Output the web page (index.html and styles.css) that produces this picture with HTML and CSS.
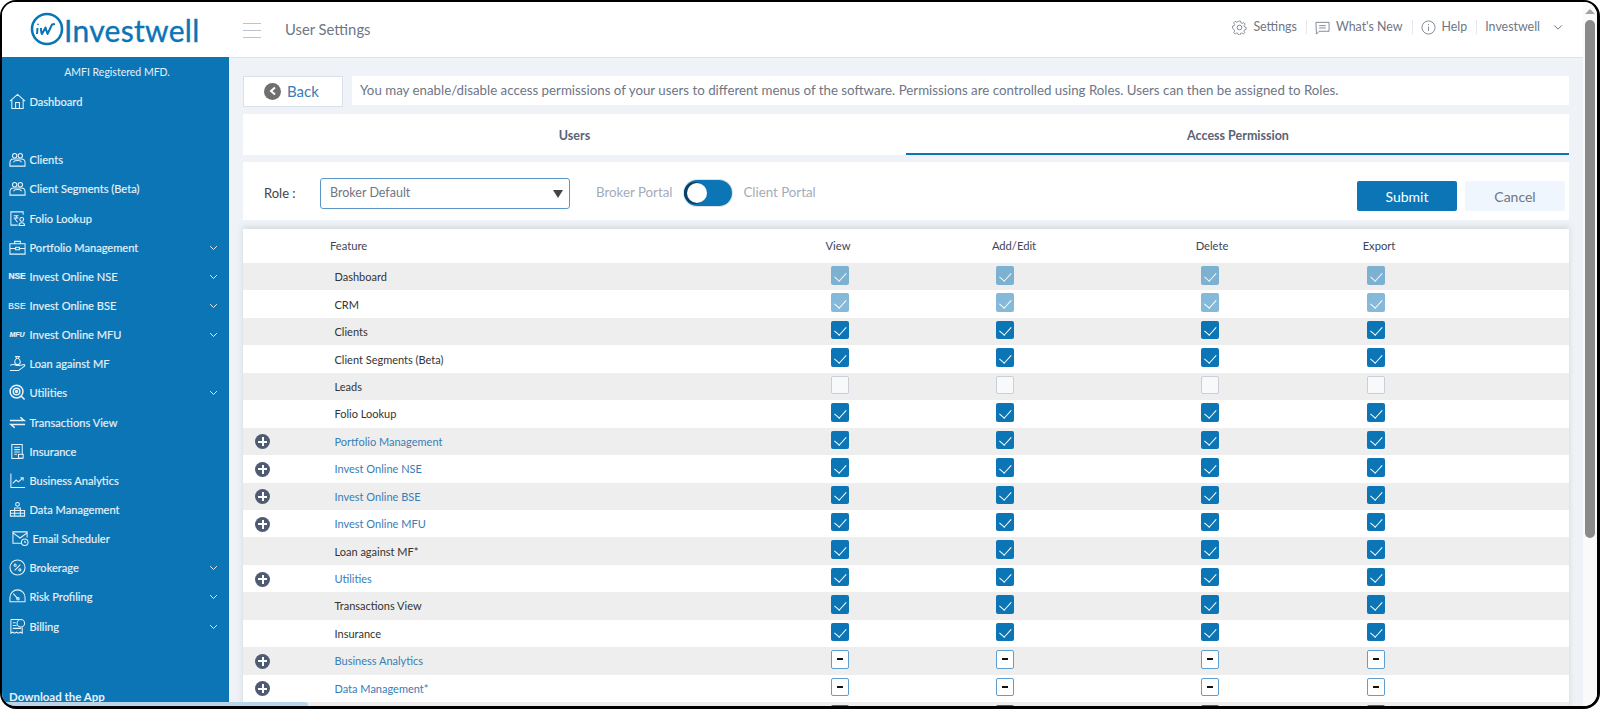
FILE: index.html
```html
<!DOCTYPE html>
<html lang="en">
<head>
<meta charset="utf-8">
<title>User Settings</title>
<link rel="stylesheet" href="styles.css">
</head>
<body>
<div class="frame">
  <div class="app">
    <header class="topbar">
      <div class="logo">
        <svg class="logo-mark" viewBox="0 0 34 34"><circle cx="17" cy="17" r="15" fill="none" stroke="#0c75b5" stroke-width="2.6"/><path d="M7.500 16 7 22M8 11.800v1M11 16c0 3 0 5 1 6l3.500-6.500L17.500 22l4.500-9.500 3-.5" fill="none" stroke="#0c75b5" stroke-width="2" stroke-linejoin="round"/></svg>
        <span class="logo-text">Investwell</span>
      </div>
      <div class="burger"><i></i><i></i><i></i></div>
      <div class="page-title">User Settings</div>
      <nav class="topnav">
        <a class="tn"><svg viewBox="0 0 16 16"><circle cx="8" cy="8" r="2.500"/><path d="M6.800 1h2.400l.4 2 1.500.7 1.800-1 1.500 1.800-1.200 1.700.4 1.600 1.900.6v2.200l-1.900.6-.6 1.500 1 1.700-1.700 1.500-1.700-1.100-1.500.6-.4 1.900H6.800l-.5-1.900-1.500-.6-1.600 1.100-1.700-1.500 1-1.700-.6-1.500L.1 9.200V7l1.900-.6.500-1.600-1.100-1.700L3 1.300l1.700 1 1.600-.6z" transform="translate(.4 .2) scale(.95 .92)"/></svg>Settings</a>
        <a class="tn"><svg viewBox="0 0 16 16"><path d="M1 2.500h14v9.500H4.500L1.500 15z"/><path d="M4.500 6h7M4.500 8.500h7"/></svg>What's New</a>
        <a class="tn"><svg viewBox="0 0 16 16"><circle cx="8" cy="8" r="7"/><path d="M8 7v4.500M8 4.300v1.200"/></svg>Help</a>
        <a class="tn tn-user">Investwell<svg class="tn-chev" viewBox="0 0 12 8"><path d="M1.500 1.500 6 6l4.500-4.500"/></svg></a>
      </nav>
    </header>
    <div class="workspace">
      <aside class="sidebar">
        <div class="amfi">AMFI Registered MFD.</div>
        <ul class="menu">
          <li><span class="mi"><svg viewBox="0 0 18 18"><path d="M1 8.500 9 1.500l8 7M3 7.500V16.500h12V7.500M7 16.500V10h4v6.500"/></svg></span>Dashboard</li>
          <li class="blank"></li>
          <li><span class="mi"><svg viewBox="0 0 18 18"><circle cx="6" cy="5" r="2.300"/><circle cx="12" cy="5" r="2.300"/><path d="M1 12.500c0-3 2-4 4-4h8c2 0 4 1 4 4M1 12.500v3.500h16v-3.500M5 12c0-1.500 1.500-2 4-2s4 .5 4 2"/></svg></span>Clients</li>
          <li><span class="mi"><svg viewBox="0 0 18 18"><circle cx="6" cy="5" r="2.300"/><circle cx="12" cy="5" r="2.300"/><path d="M1 12.500c0-3 2-4 4-4h8c2 0 4 1 4 4M1 12.500v3.500h16v-3.500M5 12c0-1.500 1.500-2 4-2s4 .5 4 2"/></svg></span>Client Segments (Beta)</li>
          <li><span class="mi"><svg viewBox="0 0 18 18"><path d="M15 5V2H2v14h7"/><path d="M5 6h5M5 8.500h5M6 6c3 0 3 3 0 3l3 4"/><circle cx="13.500" cy="10" r="2"/><path d="M10.500 16.500c0-4 6-4 6 0z"/></svg></span>Folio Lookup</li>
          <li class="has"><span class="mi"><svg viewBox="0 0 18 18"><path d="M1 5h16v11H1zM6 5V2.500h6V5M1 10h6M11 10h6"/><rect x="7" y="8.800" width="4" height="2.600"/></svg></span>Portfolio Management<svg class="chev" viewBox="0 0 12 8"><path d="M1.500 1.500 6 6l4.500-4.500"/></svg></li>
          <li class="has"><span class="mi mi-tag">NSE</span>Invest Online NSE<svg class="chev" viewBox="0 0 12 8"><path d="M1.500 1.500 6 6l4.500-4.500"/></svg></li>
          <li class="has"><span class="mi mi-tag mi-thin">BSE</span>Invest Online BSE<svg class="chev" viewBox="0 0 12 8"><path d="M1.500 1.500 6 6l4.500-4.500"/></svg></li>
          <li class="has"><span class="mi mi-tag mi-small">MFU</span>Invest Online MFU<svg class="chev" viewBox="0 0 12 8"><path d="M1.500 1.500 6 6l4.500-4.500"/></svg></li>
          <li><span class="mi"><svg viewBox="0 0 18 18"><path d="M7 1.500h4l-1 2H8zM8 3.500C5.500 5.500 5 10 9 10s3.500-4.500 1-6.500M1 11c3-1.500 5-1 6.500 0H11l5-1c.8 0 1 1.500 0 2l-6 4.500H1"/></svg></span>Loan against MF</li>
          <li class="has"><span class="mi"><svg class="thick" viewBox="0 0 18 18"><circle cx="8" cy="8" r="6.800"/><circle cx="8" cy="8" r="3.500"/><circle cx="8" cy="8" r="1"/><path d="m12.500 12.500 4 4"/></svg></span>Utilities<svg class="chev" viewBox="0 0 12 8"><path d="M1.500 1.500 6 6l4.500-4.500"/></svg></li>
          <li><span class="mi"><svg class="thick" viewBox="0 0 18 18"><path d="M1 7h15l-4-3.500M17 11H2l4 3.500"/></svg></span>Transactions View</li>
          <li><span class="mi"><svg viewBox="0 0 18 18"><path d="M3 1.500h11v15H3z"/><path d="M5.500 4.500h6M5.500 7h6M5.500 9.500h6M5.500 12h3"/><rect x="10" y="12" width="5" height="4" fill="#0c75b5"/></svg></span>Insurance</li>
          <li><span class="mi"><svg viewBox="0 0 18 18"><path d="M2 1.500V16.500h15M4 12l3.500-3.500 2.500 2 5-4.500M12 6h3v3"/></svg></span>Business Analytics</li>
          <li><span class="mi"><svg viewBox="0 0 18 18"><circle cx="9" cy="3.500" r="2"/><path d="M6 7.500h6v8.500H6zM1.500 10h4.500v6H1.500zM12 10h4.500v6H12zM1.500 13h15M6 10h6"/></svg></span>Data Management</li>
          <li class="indent"><span class="mi"><svg viewBox="0 0 18 18"><path d="M10 14H1V2h15v6M1 3l7.500 5.500L16 3"/><circle cx="13.500" cy="13" r="3.500"/><path d="M13.500 11.300V13h1.500"/></svg></span>Email Scheduler</li>
          <li class="has"><span class="mi"><svg viewBox="0 0 18 18"><circle cx="9" cy="9" r="8"/><path d="m6 12 6-6"/><circle cx="6.500" cy="6.500" r="1.100"/><circle cx="11.500" cy="11.500" r="1.100"/></svg></span>Brokerage<svg class="chev" viewBox="0 0 12 8"><path d="M1.500 1.500 6 6l4.500-4.500"/></svg></li>
          <li class="has tight"><span class="mi"><svg viewBox="0 0 18 18"><path d="M1 14.500V10a8 8 0 0 1 16 0v4.500zM4.500 6 9 11"/><circle cx="9.500" cy="11.500" r="1.300"/></svg></span>Risk Profiling<svg class="chev" viewBox="0 0 12 8"><path d="M1.500 1.500 6 6l4.500-4.500"/></svg></li>
          <li class="has"><span class="mi"><svg viewBox="0 0 18 18"><path d="M2 1.500h9M2 1.500V16l2-1 2 1 2-1 2 1 2-1 2 1v-6M4 5h3M4 8h4M4 11h9"/><circle cx="12.500" cy="5.500" r="4"/></svg></span>Billing<svg class="chev" viewBox="0 0 12 8"><path d="M1.500 1.500 6 6l4.500-4.500"/></svg></li>
        </ul>
        <div class="download">Download the App</div>
      </aside>
      <main class="main">
        <div class="intro">
          <button class="back"><span class="back-ico"><svg viewBox="0 0 10 10"><path d="M7 1.500 3 5l4 3.500"/></svg></span>Back</button>
          <p class="desc">You may enable/disable access permissions of your users to different menus of the software. Permissions are controlled using Roles. Users can then be assigned to Roles.</p>
        </div>
        <div class="tabs">
          <div class="tab">Users</div>
          <div class="tab active">Access Permission</div>
        </div>
        <div class="filters">
          <span class="role-label">Role :</span>
          <div class="select">Broker Default<i class="caret"></i></div>
          <span class="portal">Broker Portal</span>
          <span class="toggle"><i></i></span>
          <span class="portal">Client Portal</span>
          <div class="actions">
            <button class="btn primary">Submit</button>
            <button class="btn ghost">Cancel</button>
          </div>
        </div>
        <div class="table">
          <div class="thead">
            <span class="th-feature">Feature</span><span>View</span><span>Add/Edit</span><span>Delete</span><span>Export</span>
          </div>
          <div class="row"><span></span><span class="name">Dashboard</span><i class="cb dim"></i><i class="cb dim"></i><i class="cb dim"></i><i class="cb dim"></i></div>
          <div class="row"><span></span><span class="name">CRM</span><i class="cb dim"></i><i class="cb dim"></i><i class="cb dim"></i><i class="cb dim"></i></div>
          <div class="row"><span></span><span class="name">Clients</span><i class="cb"></i><i class="cb"></i><i class="cb"></i><i class="cb"></i></div>
          <div class="row"><span></span><span class="name">Client Segments (Beta)</span><i class="cb"></i><i class="cb"></i><i class="cb"></i><i class="cb"></i></div>
          <div class="row"><span></span><span class="name">Leads</span><i class="cb off"></i><i class="cb off"></i><i class="cb off"></i><i class="cb off"></i></div>
          <div class="row"><span></span><span class="name">Folio Lookup</span><i class="cb"></i><i class="cb"></i><i class="cb"></i><i class="cb"></i></div>
          <div class="row"><span class="plus"></span><span class="name link">Portfolio Management</span><i class="cb"></i><i class="cb"></i><i class="cb"></i><i class="cb"></i></div>
          <div class="row"><span class="plus"></span><span class="name link">Invest Online NSE</span><i class="cb"></i><i class="cb"></i><i class="cb"></i><i class="cb"></i></div>
          <div class="row"><span class="plus"></span><span class="name link">Invest Online BSE</span><i class="cb"></i><i class="cb"></i><i class="cb"></i><i class="cb"></i></div>
          <div class="row"><span class="plus"></span><span class="name link">Invest Online MFU</span><i class="cb"></i><i class="cb"></i><i class="cb"></i><i class="cb"></i></div>
          <div class="row"><span></span><span class="name">Loan against MF*</span><i class="cb"></i><i class="cb"></i><i class="cb"></i><i class="cb"></i></div>
          <div class="row"><span class="plus"></span><span class="name link">Utilities</span><i class="cb"></i><i class="cb"></i><i class="cb"></i><i class="cb"></i></div>
          <div class="row"><span></span><span class="name">Transactions View</span><i class="cb"></i><i class="cb"></i><i class="cb"></i><i class="cb"></i></div>
          <div class="row"><span></span><span class="name">Insurance</span><i class="cb"></i><i class="cb"></i><i class="cb"></i><i class="cb"></i></div>
          <div class="row"><span class="plus"></span><span class="name link">Business Analytics</span><i class="cb part"></i><i class="cb part"></i><i class="cb part"></i><i class="cb part"></i></div>
          <div class="row"><span class="plus"></span><span class="name link">Data Management*</span><i class="cb part"></i><i class="cb part"></i><i class="cb part"></i><i class="cb part"></i></div>
          <div class="row"><span></span><span class="name"></span><i class="cb"></i><i class="cb"></i><i class="cb"></i><i class="cb"></i></div>
        </div>
      </main>
    </div>
    <div class="hthumb"></div>
  </div>
  <div class="vscroll"><i class="up"></i><i class="thumb"></i></div>
</div>
</body>
</html>
```
FILE: styles.css
```css
* { box-sizing: border-box; }
html, body { margin: 0; height: 709px; overflow: hidden; background: #fff; }
body { font-family: Lato, "Open Sans", sans-serif; color: #333; }
p { margin: 0; }
button { font: inherit; cursor: pointer; }
ul { list-style: none; margin: 0; padding: 0; }

.frame {
  position: relative;
  display: flex;
  height: 709px;
  border: solid #000;
  border-width: 2px 3px 3px 2px;
  border-radius: 16px;
  overflow: hidden;
  background: #fff;
}
.app { position: relative; flex: 1; min-width: 0; display: flex; flex-direction: column; }

/* top bar */
.topbar { flex: 0 0 55px; display: flex; align-items: center; background: #fff; }
.logo { width: 241px; display: flex; align-items: center; padding-left: 28px; }
.logo-mark { width: 34px; height: 34px; flex: none; margin-top: -1px; }
.logo-text { font-size: 30px; line-height: 1; color: #0c75b5; letter-spacing: .3px; -webkit-text-stroke: .35px #0c75b5; }
.burger { width: 18px; display: flex; flex-direction: column; gap: 5.500px; margin-top: 2px; }
.burger i { display: block; height: 1.500px; background: #bcc3ce; }
.page-title { margin-left: 24px; padding-bottom: 2px; font-size: 14.800px; color: #6e7686; }
.topnav { margin-left: auto; display: flex; align-items: center; padding-right: 20px; padding-bottom: 5px; font-size: 12.400px; color: #6e7686; }
.tn { display: flex; align-items: center; gap: 6px; padding: 0 9px 0 8px; border-right: 1px solid #e3e6ec; height: 14px; line-height: 14px; }
.tn svg { width: 15px; height: 15px; fill: none; stroke: #6e7686; stroke-width: .9; }
.tn-user { border-right: 0; gap: 0; padding-left: 8px; padding-right: 0; }
.tn svg.tn-chev { width: 10px; height: 7px; margin-left: 13px; stroke-width: 1.200; }

.workspace { flex: 1; min-height: 0; display: flex; }

/* sidebar */
.sidebar { position: relative; flex: 0 0 227px; background: #0c75b5; color: #e8f2f9; padding-top: 9px; font-size: 11.100px; }
.amfi { height: 13px; line-height: 13px; text-align: center; font-size: 10.500px; padding-left: 3px; margin-bottom: 8px; }
.menu li { position: relative; display: flex; align-items: center; height: 29.150px; padding-left: 6px; white-space: nowrap; -webkit-text-stroke: .15px #e8f2f9; }
.menu li.indent { padding-left: 9px; }
.mi { flex: none; width: 18px; height: 18px; margin-right: 3.500px; display: flex; align-items: center; justify-content: center; }
.mi svg { width: 17px; height: 17px; fill: none; stroke: #e8f2f9; stroke-width: 1.100; overflow: visible; }
.mi svg.thick { stroke-width: 1.600; }
.mi-tag { font-family: "Liberation Sans", sans-serif; font-size: 8.500px; font-weight: 700; letter-spacing: -.1px; width: 18px; }
.mi-thin { font-weight: 400; letter-spacing: .2px; }
.mi-small { font-size: 7px; font-style: italic; }
.chev { position: absolute; right: 11px; top: 12px; width: 9px; height: 6px; fill: none; stroke: #e8f2f9; stroke-width: 1.300; }
.download { position: absolute; left: 7px; bottom: 2px; font-weight: 700; font-size: 11.500px; line-height: 14px; }

/* main */
.main { flex: 1; min-width: 0; overflow: hidden; background: #eff3f8; border-top: 1px solid #dde3ec; padding: 18px 14px 0; }
.intro { display: flex; align-items: flex-start; gap: 9px; height: 38px; }
.back { flex: 0 0 100px; height: 31px; display: flex; align-items: center; gap: 6px; padding: 0 0 1px 20px; background: #fff; border: 1px solid #dbe1ea; font-size: 15px; color: #3a7db6; }
.back-ico { width: 17px; height: 17px; border-radius: 50%; background: #6f6f6f; display: flex; align-items: center; justify-content: center; }
.back-ico svg { width: 10px; height: 10px; fill: none; stroke: #fff; stroke-width: 2; }
.desc { flex: 1; height: 29px; line-height: 29px; padding-left: 8px; background: #fff; font-size: 13.300px; color: #6e7686; white-space: nowrap; }

.tabs { height: 41px; display: grid; grid-template-columns: 1fr 1fr; background: #fff; margin-bottom: 7px; }
.tab { display: flex; align-items: center; justify-content: center; padding-top: 2px; font-size: 12.500px; font-weight: 700; color: #5a6374; }
.tab.active { padding-top: 4px; padding-left: 1px; border-bottom: 2px solid #0c75b5; }

.filters { height: 58px; display: flex; align-items: center; background: #fff; margin-bottom: 9px; padding-left: 21px; font-size: 12.500px; }
.role-label { width: 56px; font-size: 13px; color: #444; margin-top: 4px; }
.select { position: relative; width: 250px; height: 31px; line-height: 27px; padding-left: 9px; border: 1px solid #5b96c6; border-radius: 3px; color: #6e7686; margin-top: 5px; }
.caret { position: absolute; top: 11px; right: 6px; width: 0; height: 0; border: 5px solid transparent; border-top: 8px solid #444; border-bottom: 0; }
.portal { font-size: 13.300px; color: #a4abb8; margin-top: 2px; }
.select + .portal { margin-left: 26px; }
.toggle { position: relative; width: 48px; height: 26px; margin: 4px 11px 0 12px; border-radius: 13px; background: #0c75b5; box-shadow: 0 0 0 1px #dfe3e8; }
.toggle i { position: absolute; left: 3px; top: 3px; width: 20px; height: 20px; border-radius: 50%; background: #fff; box-shadow: -2px 0 0 1px #0a3f63; }
.actions { margin-left: auto; display: flex; gap: 8px; padding-right: 4px; margin-top: 10px; }
.btn { width: 100px; height: 30px; border: 0; border-radius: 2px; font-size: 14px; }
.primary { background: #0c75b5; color: #fff; }
.ghost { background: #f0f6fd; color: #6e7686; }

/* table */
.table { background: #fff; box-shadow: 0 -2px 6px rgba(120, 130, 145, .25); }
.thead, .row { display: grid; align-items: center; }
.thead { height: 34px; padding-bottom: 2px; grid-template-columns: 87px 430px 156px 196px 200px 134px; font-size: 11.200px; color: #3d4656; text-align: center; }
.thead span:first-child { grid-column: 2; text-align: left; }
.row { height: 27.450px; grid-template-columns: 91.500px 424.500px 161px 170px 240px 92px; font-size: 11px; }
.row:nth-child(even) { background: #eee; }
.name { color: #333; }
.link { color: #3a7db6; }
.plus { position: relative; justify-self: start; margin-left: 12px; margin-top: 1px; width: 15px; height: 15px; border-radius: 50%; background: #4f5b73; }
.plus::before, .plus::after { content: ""; position: absolute; background: #fff; }
.plus::before { left: 3px; right: 3px; top: 6.500px; height: 2px; }
.plus::after { top: 3px; bottom: 3px; left: 6.500px; width: 2px; }
.cb { position: relative; justify-self: center; align-self: start; margin-top: 3px; width: 18px; height: 18.500px; border-radius: 2px; background: #0c75b5; }
.cb::after { content: ""; position: absolute; left: 6px; top: 3.500px; width: 6px; height: 9.500px; border: solid #fff; border-width: 0 1.600px 1.600px 0; transform: rotate(42deg); }
.cb.dim { opacity: .5; }
.cb.off { background: #f8f9fb; border: 1px solid #c8cfd9; }
.cb.off::after { display: none; }
.cb.part { background: #fff; border: 1px solid #5f9ed1; }
.cb.part::after { left: 5px; top: 7px; width: 6px; height: 2px; border: 0; background: #111; transform: none; }

/* scrollbars */
.hthumb { position: absolute; left: 0; bottom: 0; width: 306px; height: 4px; background: #b9d5ea; border-radius: 0 3px 0 0; }
.vscroll { position: relative; flex: 0 0 14px; background: #fafafa; padding-top: 7px; display: flex; flex-direction: column; align-items: center; }
.up { width: 0; height: 0; border: 5px solid transparent; border-bottom: 5px solid #a3a3a3; border-top: 0; }
.thumb { width: 10px; height: 518px; margin-top: 6px; background: #8a8a8a; border-radius: 5px; }
```
